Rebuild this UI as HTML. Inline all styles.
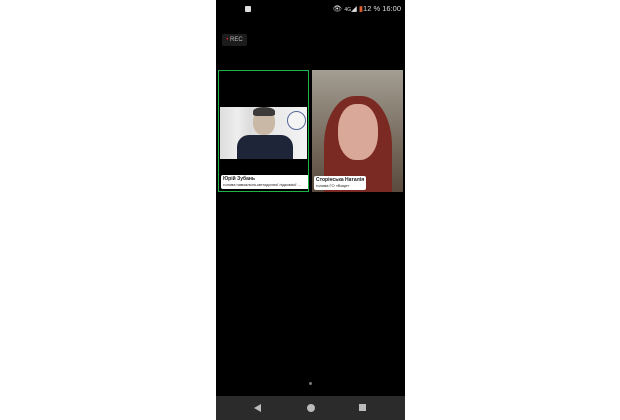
<!DOCTYPE html>
<html><head><meta charset="utf-8"><style>
body{margin:0;width:620px;height:420px;background:#fff;position:relative;overflow:hidden;font-family:"Liberation Sans",sans-serif}
.ph{position:absolute;left:216px;top:0;width:189px;height:420px;background:#000}
.nav{position:absolute;left:0;bottom:0;width:189px;height:24px;background:#2b2b2b}
.t{position:absolute;top:70px;width:91px;height:122px;overflow:hidden}
.lab{position:absolute;left:2px;bottom:2px;background:#fff;border-radius:2px;padding:1px 2px;font-size:4px;line-height:6px;color:#222;white-space:nowrap;overflow:hidden}
.lab b{font-size:5px}
</style></head><body>
<div class="ph">
 <div style="position:absolute;left:29px;top:6px;width:6px;height:6px;background:#ddd;border-radius:1px"></div>
 <div style="position:absolute;right:4px;top:4px;color:#ddd;font-size:7.5px">👁 <span style="font-size:5px">4G</span>◢ <span style="color:#e06030">▮</span>12 % 16:00</div>
 <div style="position:absolute;left:6px;top:34px;width:25px;height:12px;background:#1c1c1c;border-radius:2px;color:#bbb;font-size:6px;line-height:12px;text-align:center"><span style="color:#e02020">•</span> REC</div>
 <div class="t" style="left:2px;border:1px solid #1fb14a;box-sizing:border-box;background:#000">
  <div style="position:absolute;left:1px;right:1px;top:36px;height:52px;background:linear-gradient(90deg,#ddd 0,#eee 20%,#dcdcdc 35%,#e8e8e8 60%,#f3f3f3 100%)"></div>
  <div style="position:absolute;left:34px;top:38px;width:22px;height:26px;background:#c9b8a6;border-radius:45%"></div>
  <div style="position:absolute;left:34px;top:36px;width:22px;height:9px;background:#3d3b3a;border-radius:50% 50% 20% 20%"></div>
  <div style="position:absolute;left:18px;top:64px;width:56px;height:24px;background:#1f2538;border-radius:12px 12px 0 0"></div>
  <div style="position:absolute;left:68px;top:40px;width:17px;height:17px;border-radius:50%;border:1px solid #56679a;background:#f4f4f4"></div>
  <div class="lab" style="width:84px"><b>Юрій Зубань</b><br>голова навчально-методичної підкомісії ...</div>
 </div>
 <div class="t" style="left:96px;background:linear-gradient(180deg,#a39d92 0,#857b6e 40%,#5a4a3e 100%)">
  <div style="position:absolute;left:12px;top:26px;width:68px;height:110px;background:#7a2a22;border-radius:45% 45% 10% 10%"></div>
  <div style="position:absolute;left:26px;top:34px;width:40px;height:56px;background:#d9a898;border-radius:45%"></div>
  <div class="lab"><b>Сторінська Наталія</b><br>голова ГО «Вице»</div>
 </div>
 <div style="position:absolute;left:93px;top:382px;width:3px;height:3px;border-radius:50%;background:#777"></div>
 <div class="nav">
  <div style="position:absolute;left:38px;top:8px;width:0;height:0;border-top:4px solid transparent;border-bottom:4px solid transparent;border-right:7px solid #bbb"></div>
  <div style="position:absolute;left:91px;top:8px;width:8px;height:8px;border-radius:50%;background:#bbb"></div>
  <div style="position:absolute;left:143px;top:8px;width:7px;height:7px;background:#bbb"></div>
 </div>
</div>
</body></html>
